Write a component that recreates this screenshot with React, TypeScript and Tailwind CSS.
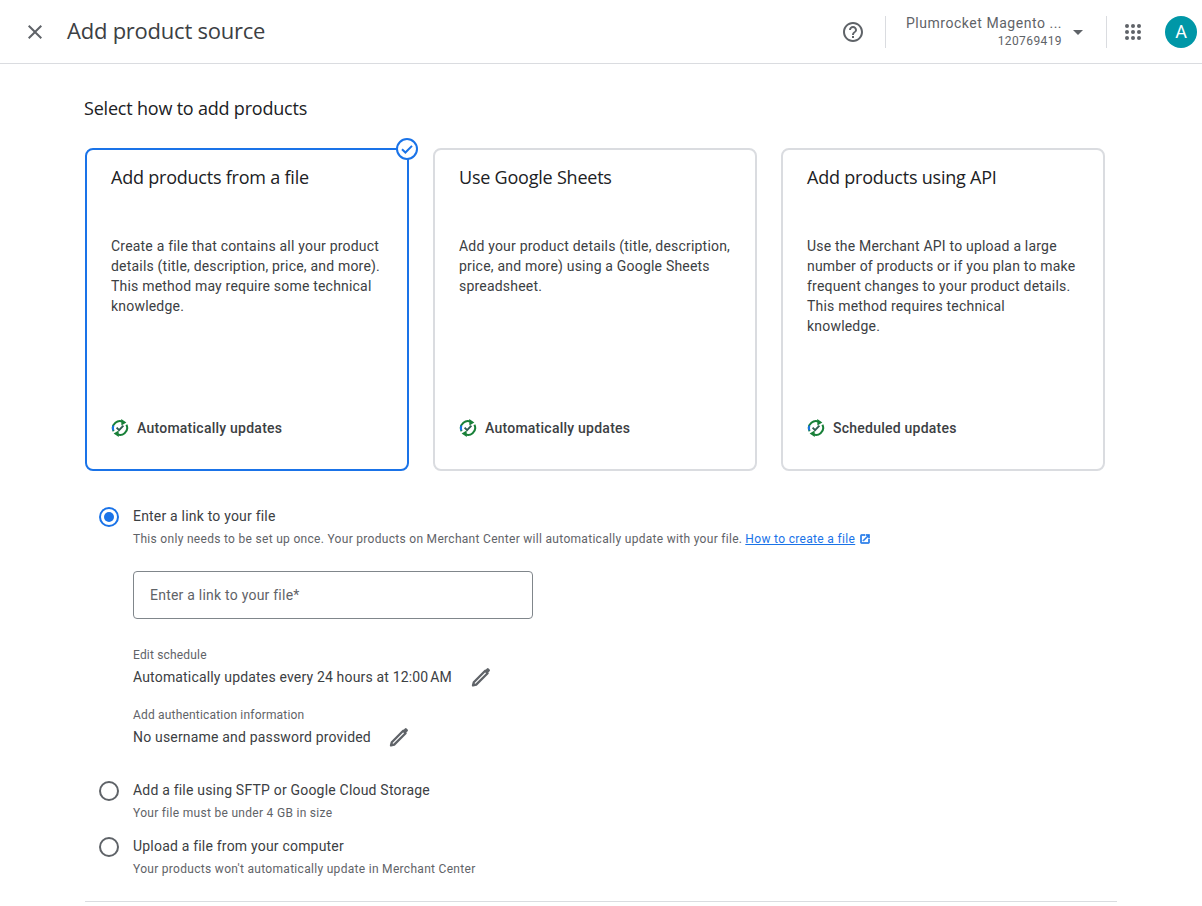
import React from "react";

const Sync = () => (
  <svg width="18" height="18" viewBox="0 0 18 18" fill="none" className="shrink-0">
    <path d="M2.6 12.2A7 7 0 0 1 4.4 3.8 7 7 0 0 1 11.5 2.6" stroke="#188038" strokeWidth="2" />
    <path d="M15.4 5.8A7 7 0 0 1 13.6 14.2 7 7 0 0 1 6.5 15.4" stroke="#188038" strokeWidth="2" />
    <path d="M10.2 0l5.2 3.4-5 3.2z" fill="#188038" />
    <path d="M7.8 18l-5.2-3.4 5-3.2z" fill="#188038" />
    <path d="M2.3 11.4A7 7 0 0 1 2.4 6.6" stroke="#1a73e8" strokeWidth="2" />
    <path d="M5.6 8.6l2.5 2.5 4.3-4.4" stroke="#2f5d50" strokeWidth="1.9" />
  </svg>
);

const Pencil = () => (
  <svg width="24" height="24" viewBox="0 0 24 24" fill="none" className="shrink-0">
    <path d="M4.8 17.2L16.2 5.8l2.4 2.4L7.2 19.6l-3.2.8z" stroke="#5f6368" strokeWidth="2.3" strokeLinejoin="round" />
    <path d="M16 5.4l1.9-1.9a1.2 1.2 0 0 1 1.7 0l1 1a1.2 1.2 0 0 1 0 1.7L18.7 8z" fill="#5f6368" />
  </svg>
);

function Card({ title, lines, foot, selected }: { title: string; lines: string[]; foot: string; selected?: boolean }) {
  return (
    <div
      className={`relative w-[324px] h-[323px] rounded-lg border-2 bg-white pl-6 pr-4 flex flex-col ${
        selected ? "border-[#1a73e8]" : "border-[#dadce0]"
      }`}
    >
      {selected && (
        <div className="absolute -top-[12px] -right-[11px] w-[22px] h-[22px] rounded-full bg-white border-2 border-[#1a73e8] flex items-center justify-center">
          <svg width="14" height="14" viewBox="0 0 14 14" fill="none">
            <path d="M2 7.2l3.4 3.3L12 3.9" stroke="#1a73e8" strokeWidth="2" />
          </svg>
        </div>
      )}
      <div className="mt-[15px] text-[18px] leading-6 text-[#202124] font-['Open_Sans','Roboto',sans-serif] tracking-[-0.22px]">{title}</div>
      <div className="mt-[47px] text-sm leading-5 text-[#3c4043] tracking-[0.2px]">
        {lines.map((l) => (
          <div key={l} className="whitespace-nowrap">{l}</div>
        ))}
      </div>
      <div className="mt-auto mb-[31px] flex items-center gap-[8px] text-sm leading-5 font-medium text-[#3c4043] tracking-[0.24px]">
        <Sync />
        <span>{foot}</span>
      </div>
    </div>
  );
}

function Radio({ checked }: { checked?: boolean }) {
  return (
    <div
      className={`w-5 h-5 rounded-full border-2 flex items-center justify-center shrink-0 ${
        checked ? "border-[#1a73e8]" : "border-[#5f6368]"
      }`}
    >
      {checked && <div className="w-[10px] h-[10px] rounded-full bg-[#1a73e8]" />}
    </div>
  );
}

export default function App() {
  return (
    <div className="w-[1202px] h-[906px] overflow-hidden bg-white font-['Roboto',sans-serif]">
      <header className="h-16 border-b border-[#dadce0] flex items-center pl-[23px]">
        <svg width="24" height="24" viewBox="0 0 24 24" fill="#5f6368" className="shrink-0">
          <path d="M19 6.41 17.59 5 12 10.59 6.41 5 5 6.41 10.59 12 5 17.59 6.41 19 12 13.41 17.59 19 19 17.59 13.41 12z" />
        </svg>
        <h1 className="ml-5 mb-1 text-[22px] leading-7 text-[#3c4043] font-['Open_Sans','Roboto',sans-serif] tracking-[-0.23px]">Add product source</h1>
        <div className="ml-auto flex items-center h-8">
          <svg width="24" height="24" viewBox="0 0 24 24" fill="#5f6368">
            <path d="M11 18h2v-2h-2v2zm1-16C6.48 2 2 6.48 2 12s4.48 10 10 10 10-4.48 10-10S17.52 2 12 2zm0 18c-4.41 0-8-3.59-8-8s3.59-8 8-8 8 3.59 8 8-3.59 8-8 8zm0-14c-2.21 0-4 1.79-4 4h2c0-1.1.9-2 2-2s2 .9 2 2c0 2-3 1.75-3 5h2c0-2.25 3-2.5 3-5 0-2.21-1.79-4-4-4z" />
          </svg>
          <div className="ml-[20px] w-px h-8 bg-[#dadce0]" />
          <div className="ml-5 w-[156px] text-right">
            <div className="mb-px text-sm leading-[18px] text-[#5f6368] whitespace-nowrap tracking-[0.53px]">Plumrocket Magento ...</div>
            <div className="text-xs leading-4 text-[#5f6368] tracking-[0.4px]">120769419</div>
          </div>
          <svg width="24" height="24" viewBox="0 0 24 24" fill="#5f6368" className="ml-[4px]">
            <path d="M7 10l5 5 5-5z" />
          </svg>
          <div className="ml-[16px] w-px h-8 bg-[#dadce0]" />
          <svg width="24" height="24" viewBox="0 0 24 24" fill="#5f6368" className="ml-[14px]">
            {[6, 12, 18].flatMap((y) =>
              [6, 12, 18].map((x) => <circle key={`${x}-${y}`} cx={x} cy={y} r="2" />)
            )}
          </svg>
          <div className="ml-[20px] mr-[5px] w-8 h-8 rounded-full bg-[#0097a7] text-white flex items-center justify-center text-lg">A</div>
        </div>
      </header>

      <main className="pl-[85px] pr-[85px]">
        <h2 className="mt-[32px] -ml-px text-[18px] leading-6 text-[#202124] font-['Open_Sans','Roboto',sans-serif] tracking-[-0.2px]">Select how to add products</h2>
        <div className="mt-[28px] flex gap-6">
          <Card
            selected
            title="Add products from a file"
            lines={[
              "Create a file that contains all your product",
              "details (title, description, price, and more).",
              "This method may require some technical",
              "knowledge.",
            ]}
            foot="Automatically updates"
          />
          <Card
            title="Use Google Sheets"
            lines={[
              "Add your product details (title, description,",
              "price, and more) using a Google Sheets",
              "spreadsheet.",
            ]}
            foot="Automatically updates"
          />
          <Card
            title="Add products using API"
            lines={[
              "Use the Merchant API to upload a large",
              "number of products or if you plan to make",
              "frequent changes to your product details.",
              "This method requires technical",
              "knowledge.",
            ]}
            foot="Scheduled updates"
          />
        </div>

        <section className="mt-[35px] ml-[14px]">
          <div className="flex gap-[14px]">
            <div className="mt-[1px]"><Radio checked /></div>
            <div>
              <div className="text-sm leading-5 text-[#3c4043] tracking-[0.2px]">Enter a link to your file</div>
              <div className="mt-[4px] flex items-center text-xs leading-[18px] text-[#5f6368] whitespace-nowrap tracking-[0.3px]">
                This only needs to be set up once. Your products on Merchant Center will automatically update with your file.
                <a className="ml-[3px] text-[#1a73e8] underline tracking-[0.33px]">How to create a file</a>
                <svg width="12" height="12" viewBox="0 0 24 24" fill="#1a73e8" stroke="#1a73e8" strokeWidth="1.2" className="ml-[4px]">
                  <path d="M19 19H5V5h7V3H5a2 2 0 0 0-2 2v14a2 2 0 0 0 2 2h14c1.1 0 2-.9 2-2v-7h-2v7zM14 3v2h3.59l-9.83 9.83 1.41 1.41L19 6.41V10h2V3h-7z" />
                </svg>
              </div>
              <div className="mt-[23px] w-[400px] h-12 pb-px rounded border border-[#80868b] flex items-center pl-4 text-sm text-[#5f6368] tracking-[0.23px]">
                Enter a link to your file*
              </div>
              <div className="mt-[27px] text-xs leading-[18px] text-[#5f6368] tracking-[0.18px]">Edit schedule</div>
              <div className="mt-px flex items-center h-6 text-sm text-[#3c4043] tracking-[0.17px]">
                <span>Automatically updates every 24 hours at 12:00{"\u202f"}AM</span>
                <span className="ml-[17px]"><Pencil /></span>
              </div>
              <div className="mt-[17px] text-xs leading-[18px] text-[#5f6368] tracking-[0.18px]">Add authentication information</div>
              <div className="mt-px flex items-center h-6 text-sm text-[#3c4043] tracking-[0.18px]">
                <span>No username and password provided</span>
                <span className="ml-[16px]"><Pencil /></span>
              </div>
            </div>
          </div>

          <div className="mt-[31px] flex gap-[14px]">
            <div className="mt-[1px]"><Radio /></div>
            <div>
              <div className="text-sm leading-5 text-[#3c4043] tracking-[0.2px]">Add a file using SFTP or Google Cloud Storage</div>
              <div className="mt-[4px] text-xs leading-[18px] text-[#5f6368] tracking-[0.3px]">Your file must be under 4 GB in size</div>
            </div>
          </div>
          <div className="mt-[14px] flex gap-[14px]">
            <div className="mt-[1px]"><Radio /></div>
            <div>
              <div className="text-sm leading-5 text-[#3c4043] tracking-[0.2px]">Upload a file from your computer</div>
              <div className="mt-[4px] text-xs leading-[18px] text-[#5f6368] tracking-[0.3px]">Your products won't automatically update in Merchant Center</div>
            </div>
          </div>
        </section>
        <div className="mt-[23px] w-[1032px] h-px bg-[#dadce0]" />
      </main>
    </div>
  );
}
